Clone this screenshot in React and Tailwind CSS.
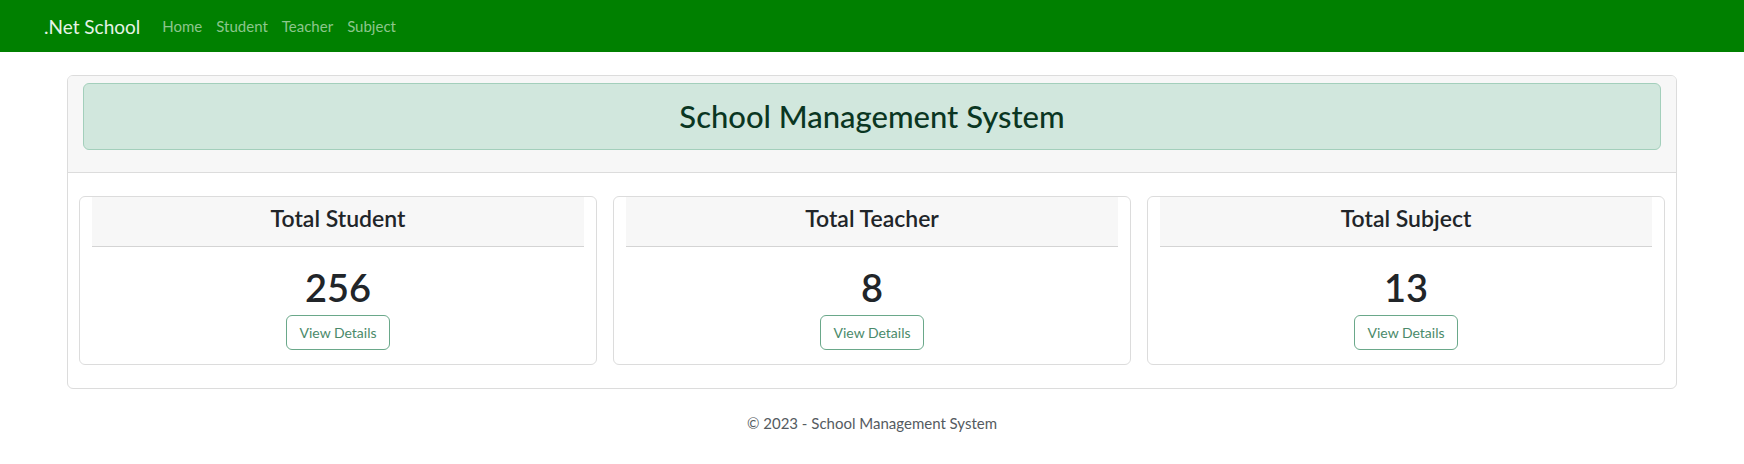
export default function App() {
  const font = { fontFamily: '"Segoe UI", Lato, "Liberation Sans", sans-serif' };
  const cards = [
    { title: "Total Student", value: "256" },
    { title: "Total Teacher", value: "8" },
    { title: "Total Subject", value: "13" },
  ];
  return (
    <div className="min-h-[464px] bg-white font-['Segoe_UI',Lato,'Liberation_Sans',sans-serif]" style={font}>
      <nav className="h-[52px] bg-[#008000] flex items-center pl-[44px]">
        <span className="text-[19px] text-[#e6f3e6] mr-[22px] leading-none">.Net School</span>
        <div className="flex items-center gap-[14px] text-[15px] text-[#8cc68c] leading-none">
          <span>Home</span>
          <span>Student</span>
          <span>Teacher</span>
          <span>Subject</span>
        </div>
      </nav>
      <main className="mt-[23px] mx-auto w-[1610px] border border-[#dcdcdc] rounded-[6px] overflow-hidden">
        <div className="bg-[#f7f7f7] px-[15px] pt-[7px] pb-[22px] border-b border-[#dcdcdc]">
          <div className="h-[67px] flex items-center justify-center bg-[#d1e7dd] border border-[#a3cfbb] rounded-[6px]">
            <h2 className="text-[31px] font-medium text-[#0a3622] leading-none">School Management System</h2>
          </div>
        </div>
        <div className="px-[11px] py-[23px] grid grid-cols-3 gap-4">
          {cards.map((c) => (
            <div key={c.title} className="h-[169px] border border-[#dcdcdc] rounded-[6px] flex flex-col items-center">
              <div className="self-stretch mx-[12px] h-[50px] pb-[6px] bg-[#f7f7f7] border-b border-[#d4d4d4] flex items-center justify-center">
                <span className="text-[23px] font-semibold text-[#212529] leading-none">{c.title}</span>
              </div>
              <div className="mt-[21px] text-[38px] font-semibold text-[#212529] leading-none">{c.value}</div>
              <button className="mt-[9px] h-[35px] px-[12px] border border-[#6aa88a] rounded-[6px] text-[14px] text-[#4a8a6a] bg-white">View Details</button>
            </div>
          ))}
        </div>
      </main>
      <footer className="mt-[23px] text-center text-[15px] text-[#555b61]">© 2023 - School Management System</footer>
    </div>
  );
}
